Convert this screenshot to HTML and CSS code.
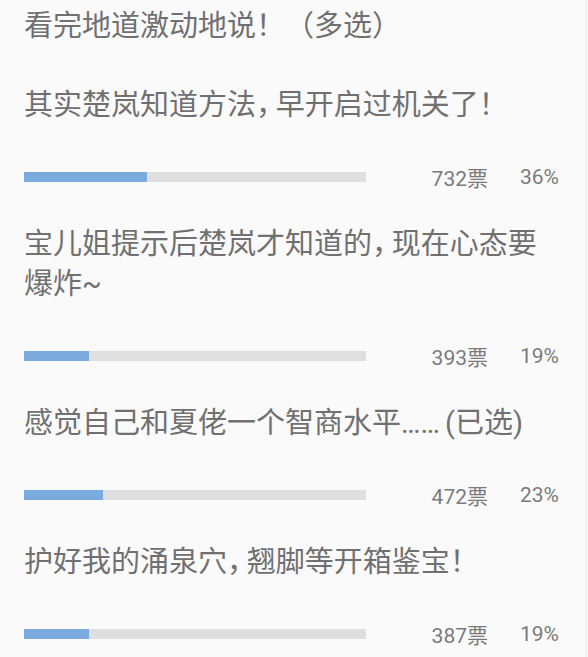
FILE: index.html
```html
<!DOCTYPE html>
<html>
<head>
  <meta charset="utf-8">
  <link rel="stylesheet" href="styles.css">
</head>
<body>
  <div class="poll">
    <div class="poll-title">看完地道激动地说！（多选）</div>

    <div class="option">
      <div class="option-text">其实楚岚知道方法， 早开启过机关了！</div>
      <div class="result">
        <div class="bar"><div class="bar-fill" style="width: 36%"></div></div>
        <div class="votes">732票</div>
        <div class="percent">36%</div>
      </div>
    </div>

    <div class="option">
      <div class="option-text">宝儿姐提示后楚岚才知道的， 现在心态要爆炸~</div>
      <div class="result">
        <div class="bar"><div class="bar-fill" style="width: 19%"></div></div>
        <div class="votes">393票</div>
        <div class="percent">19%</div>
      </div>
    </div>

    <div class="option">
      <div class="option-text">感觉自己和夏佬一个智商水平…… (已选)</div>
      <div class="result">
        <div class="bar"><div class="bar-fill" style="width: 23%"></div></div>
        <div class="votes">472票</div>
        <div class="percent">23%</div>
      </div>
    </div>

    <div class="option">
      <div class="option-text">护好我的涌泉穴， 翘脚等开箱鉴宝！</div>
      <div class="result">
        <div class="bar"><div class="bar-fill" style="width: 19%"></div></div>
        <div class="votes">387票</div>
        <div class="percent">19%</div>
      </div>
    </div>
  </div>
</body>
</html>
```

FILE: styles.css
```css
body {
  margin: 0;
  background: #fbfafb;
  font-family: Roboto, "Noto Sans CJK SC", sans-serif;
}

.poll {
  width: 587px;
  min-height: 100vh;
  box-sizing: border-box;
  padding: 6px 24px 0;
  border-right: 1px solid #ececec;
}

.poll-title {
  font-size: 29px;
  line-height: 40px;
  color: #707070;
  margin-bottom: 39px;
}

.option {
  margin-bottom: 27px;
}

/* half-width punctuation, like the app's rendering */
.option-text {
  font-size: 29px;
  line-height: 40px;
  color: #707070;
  padding-right: 6px;
  font-feature-settings: "halt";
  word-spacing: -2px;
}

.result {
  display: flex;
  align-items: center;
  height: 40px;
  margin-top: 32px;
}

.bar {
  width: 342px;
  height: 10px;
  background: #dfdfdf;
}

.bar-fill {
  height: 100%;
  background: #7aaade;
}

.votes {
  width: 122px;
  text-align: right;
  font-size: 21px;
  color: #7a7a7a;
}

.percent {
  width: 71px;
  text-align: right;
  font-size: 21px;
  color: #7a7a7a;
}
```
